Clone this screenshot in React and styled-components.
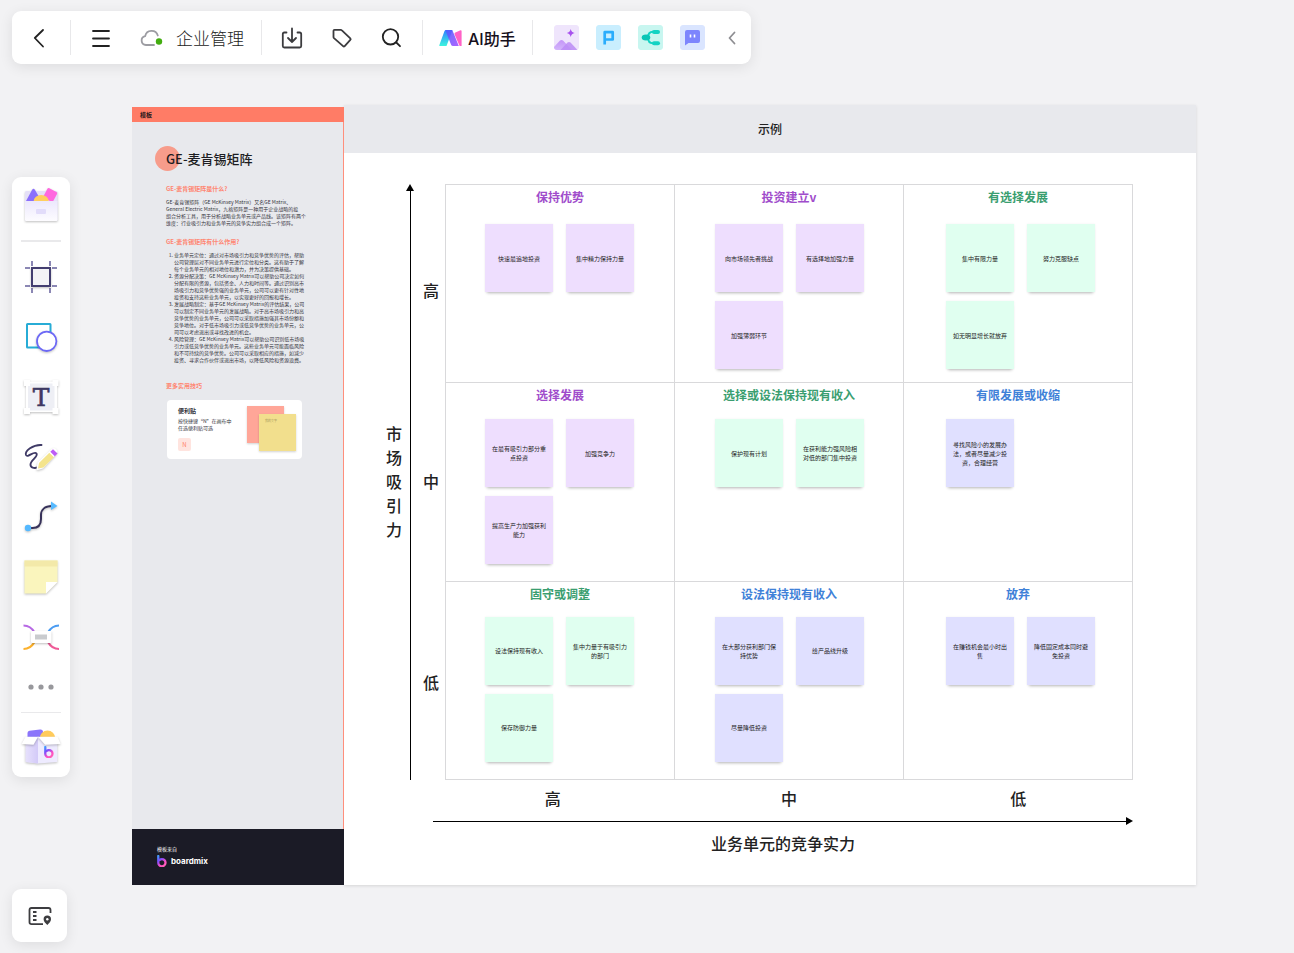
import React from "react";
import styled, { createGlobalStyle } from "styled-components";

const GlobalStyle = createGlobalStyle`
    * {
        box-sizing: border-box;
    }

    body {
        margin: 0;
        background-color: #f2f2f4;
        color: #222;
        font-family: "Noto Sans CJK SC", "Noto Sans", sans-serif;
    }

    h1, h2, h3, p, ol {
        margin: 0;
        padding: 0;
    }

    button {
        border: none;
        padding: 0;
        background: none;
        color: inherit;
        font-family: inherit;
        cursor: pointer;
    }

    svg {
        display: block;
        flex: none;
    }
`;

const Page = styled.div`
    min-height: 100vh;
    display: flex;
    flex-direction: column;
    align-items: flex-start;
    padding: 11px 12px;
`;

/* top toolbar */

const Toolbar = styled.header`
    display: flex;
    align-items: center;
    height: 53px;
    background-color: white;
    border-radius: 9px;
    box-shadow: 0 3px 14px rgba(0, 0, 0, 0.09);
`;

const ToolbarDivider = styled.div`
    width: 1px;
    height: 35px;
    background-color: #e8e8ea;
`;

const ToolbarGroup = styled.div`
    display: flex;
    align-items: center;
    width: ${props => props.$width}px;
    padding-left: ${props => props.$inset || 0}px;
    gap: ${props => props.$gap || 0}px;
`;

const IconButton = styled.button`
    display: flex;
    align-items: center;
    justify-content: center;
    width: ${props => props.$width || 50}px;
    height: 53px;
`;

const FileName = styled.h1`
    margin-left: 5px;
    font-size: 17px;
    font-weight: 300;
    line-height: 24px;
    color: #222;
    white-space: nowrap;
`;

const AiButton = styled.button`
    display: flex;
    align-items: center;
    gap: 6px;
    width: 109px;
    height: 53px;
    padding-left: 16px;
    font-family: Inter, "Noto Sans CJK SC", sans-serif;
    font-size: 16px;
    font-weight: 500;
    color: #16101c;
    white-space: nowrap;
`;

const AppButton = styled.button`
    width: 25px;
    height: 25px;
    border-radius: 3px;
    overflow: hidden;
`;

/* workspace */

const Workspace = styled.main`
    display: flex;
    align-items: flex-start;
    align-self: stretch;
    gap: 62px;
    margin-top: 41px;
    padding-right: 86px;
`;

const Rail = styled.nav`
    flex: none;
    display: flex;
    flex-direction: column;
    align-items: center;
    width: 58px;
    margin-top: 72px;
    background-color: white;
    border-radius: 9px;
    box-shadow: 0 3px 14px rgba(0, 0, 0, 0.09);
`;

const RailButton = styled.button`
    display: flex;
    align-items: center;
    justify-content: center;
    width: 58px;
    height: ${props => props.$height || 60}px;
`;

const RailDivider = styled.div`
    width: 40px;
    height: ${props => props.$size}px;
    margin: 5px 0 ${props => props.$after}px;
    background-color: #e9e9eb;
`;

const Board = styled.div`
    flex: 1;
    min-width: 0;
    display: flex;
`;

/* left template panel */

const Template = styled.aside`
    position: relative;
    flex: none;
    display: flex;
    flex-direction: column;
    width: 212px;
    margin-top: 2px;
    background-color: #e8e9ed;
`;

const TemplateTag = styled.div`
    padding-left: 8px;
    background-color: #ff7c66;
    font-size: 6px;
    font-weight: 700;
    line-height: 15px;
    color: #2b1a1c;
`;

const TemplateBody = styled.div`
    flex: 1;
    padding: 24px 41px 0 34px;
    border-right: 1px solid #ff8f7c;
`;

const TemplateTitle = styled.h2`
    display: flex;
    align-items: center;
    height: 25px;
    margin-left: -11px;
    font-size: 13px;
    font-weight: 500;
    color: #1d1d22;
    white-space: nowrap;

    &::before {
        content: "";
        width: 25px;
        height: 25px;
        margin-right: -14px;
        border-radius: 50%;
        background-color: #f79c8b;
    }

    span {
        position: relative;
    }
`;

const TemplateHeading = styled.h3`
    margin-top: ${props => props.$top}px;
    font-size: 6px;
    font-weight: 700;
    line-height: 8px;
    color: #ff8672;
`;

const TemplateText = styled.p`
    margin-top: 5px;
    font-size: 5px;
    line-height: 7px;
    color: #33333b;
    white-space: nowrap;
`;

const TemplateList = styled.ol`
    margin-top: 5px;
    padding-left: 8px;
    font-size: 5px;
    line-height: 7px;
    color: #33333b;
    white-space: nowrap;
`;

const TipCard = styled.div`
    display: flex;
    justify-content: space-between;
    width: 135px;
    height: 59px;
    margin: 10px 0 0 1px;
    padding: 6px 6px 8px 11px;
    border-radius: 4px;
    background-color: white;
`;

const TipText = styled.div`
    font-size: 5px;
    line-height: 7px;
    color: #33333b;
    white-space: nowrap;

    strong {
        display: block;
        margin-bottom: 2px;
        font-size: 6px;
        line-height: 9px;
    }
`;

const KeyCap = styled.kbd`
    display: block;
    width: 13px;
    margin-top: 7px;
    border-radius: 2px;
    background-color: #ffe4df;
    font-family: inherit;
    font-size: 6px;
    line-height: 13px;
    text-align: center;
    color: #ff7c66;
`;

const TipNotes = styled.div`
    display: grid;
    grid-template-columns: 12px 25px 12px;
    grid-template-rows: 8px 29px 8px;
`;

const TipNote = styled.div`
    grid-column: ${props => (props.$front ? "2 / 4" : "1 / 3")};
    grid-row: ${props => (props.$front ? "2 / 4" : "1 / 3")};
    padding: 5px 6px;
    background-color: ${props => (props.$front ? "#f2df8d" : "#ffa698")};
    box-shadow: 0 1px 2px rgba(0, 0, 0, 0.18);
    font-size: 3px;
    line-height: 5px;
    color: #a89a5e;
    white-space: nowrap;
`;

const Provider = styled.footer`
    height: 56px;
    padding: 16px 0 0 25px;
    background-color: #1b1b26;
    font-size: 5px;
    line-height: 8px;
    color: white;
`;

const Brand = styled.div`
    display: flex;
    align-items: center;
    gap: 4px;
    margin-top: 1px;
    font-family: Inter, sans-serif;
    font-size: 8px;
    font-weight: 700;
    line-height: 14px;
`;

/* matrix */

const Example = styled.section`
    flex: 1;
    min-width: 0;
    background-color: white;
    box-shadow: 0 1px 3px rgba(0, 0, 0, 0.12);
`;

const ExampleTitle = styled.h2`
    background-color: #e8e9ed;
    font-size: 12px;
    font-weight: 500;
    line-height: 48px;
    text-align: center;
`;

const Chart = styled.div`
    display: grid;
    grid-template-columns: 16px 16px 27px 1fr;
    padding: 31px 63px 30px 42px;
    font-size: 16px;
    font-weight: 500;
    line-height: 24px;
    text-align: center;
`;

const SideTitle = styled.div`
    align-self: center;
    width: 16px;
    padding-bottom: 2px;
`;

const SideAxis = styled.div`
    display: flex;
    flex-direction: column;
    align-items: center;

    &::after {
        content: "";
        flex: 1;
        width: 1px;
        background-color: black;
    }
`;

const SideLabels = styled.div`
    display: grid;
    grid-template-rows: repeat(3, 1fr);
    align-items: center;
    padding-top: 8px;

    span {
        padding-right: 1px;
    }

    span:nth-child(2) {
        padding-bottom: 10px;
    }
`;

const Matrix = styled.div`
    display: grid;
    grid-template-columns: repeat(3, 1fr);
    grid-template-rows: repeat(3, 1fr);
    min-height: 596px;
    border-top: 1px solid #d9d9db;
    border-left: 1px solid #d9d9db;
`;

const Cell = styled.div`
    border-right: 1px solid #d9d9db;
    border-bottom: 1px solid #d9d9db;
`;

const CellTitle = styled.h3`
    font-size: 12px;
    font-weight: 700;
    line-height: 24px;
    color: ${props => props.$color};
`;

const Notes = styled.div`
    display: grid;
    grid-template-columns: 68px 68px;
    gap: 9px 13px;
    margin-top: ${props => props.$top}px;
    padding-left: ${props => props.$left}px;
`;

const Note = styled.div`
    display: flex;
    align-items: center;
    justify-content: center;
    height: 68px;
    padding: 0 5px;
    background-color: ${props => props.$color};
    box-shadow: 0 3px 3px -2px rgba(0, 0, 0, 0.28), 0 0 2px rgba(0, 0, 0, 0.06);
    font-size: 6px;
    font-weight: 400;
    line-height: 9px;
    color: #222;
    white-space: pre;
`;

const BottomLabels = styled.div`
    grid-column: 4;
    display: grid;
    grid-template-columns: repeat(3, 1fr);
    padding: 6px 0 7px;

    span:first-child {
        padding-right: 14px;
    }
`;

const BottomAxis = styled.div`
    grid-column: 3 / 5;
    display: flex;
    align-items: center;
    margin-left: 15px;

    &::before {
        content: "";
        flex: 1;
        height: 1px;
        background-color: black;
    }
`;

const BottomTitle = styled.div`
    grid-column: 3 / 5;
    padding: 6px 0 0 15px;
`;

const MapButton = styled.button`
    display: flex;
    align-items: center;
    justify-content: center;
    width: 55px;
    height: 53px;
    margin-top: 4px;
    background-color: white;
    border-radius: 9px;
    box-shadow: 0 3px 14px rgba(0, 0, 0, 0.09);
`;

/* icons */

const LineIcon = ({ children, width = 24, color = "#222" }) => (
    <svg width={width} height="24" viewBox={`0 0 ${width} 24`} fill="none" stroke={color} strokeWidth="1.8" strokeLinecap="round" strokeLinejoin="round">
        {children}
    </svg>
);

const RailIcon = ({ children }) => (
    <svg width="40" height="40" viewBox="0 0 40 40" fill="none" overflow="visible">
        {children}
    </svg>
);

const AppIcon = ({ children }) => (
    <svg width="25" height="25" viewBox="0 0 25 25" fill="none">
        {children}
    </svg>
);

const Shaded = styled.g`
    filter: drop-shadow(0 1px 1px rgba(0, 0, 0, 0.25));
`;

const Gradients = styled.svg`
    position: absolute;
`;

const Defs = () => (
    <Gradients width="0" height="0" aria-hidden="true">
        <defs>
            <linearGradient id="aiBlue" x1="0" y1="0" x2="0" y2="1">
                <stop offset="0" stopColor="#2f80ff" />
                <stop offset="1" stopColor="#3cf5de" />
            </linearGradient>
            <linearGradient id="aiPurple" x1="0" y1="0" x2="1" y2="1">
                <stop offset="0" stopColor="#4a5cff" />
                <stop offset="1" stopColor="#a24dff" />
            </linearGradient>
            <linearGradient id="brand" x1="0" y1="0" x2="10" y2="12" gradientUnits="userSpaceOnUse">
                <stop offset="0" stopColor="#2fb4ff" />
                <stop offset="0.35" stopColor="#7a4dff" />
                <stop offset="0.65" stopColor="#ff4fc3" />
                <stop offset="1" stopColor="#ff6fb0" />
            </linearGradient>
            <linearGradient id="hill" x1="0" y1="0" x2="0" y2="1">
                <stop offset="0" stopColor="#c495f8" />
                <stop offset="1" stopColor="#d3b5fb" />
            </linearGradient>
            <linearGradient id="pocket" x1="0" y1="0" x2="0" y2="1">
                <stop offset="0" stopColor="#ece8fd" />
                <stop offset="1" stopColor="#fdfcff" />
            </linearGradient>
            <linearGradient id="carton" x1="0" y1="0" x2="1" y2="0">
                <stop offset="0" stopColor="#e6e0fc" />
                <stop offset="1" stopColor="#d3caf8" />
            </linearGradient>
        </defs>
    </Gradients>
);

const BrandMark = ({ x = 0, y = 0 }) => (
    <svg x={x} y={y} width="10" height="12" viewBox="0 0 10 12" fill="none">
        <path d="M1.3 1v6.6a3.6 3.6 0 1 0 3.6-3.5c-1 0-1.7.4-2.2.9" stroke="url(#brand)" strokeWidth="2.3" strokeLinecap="round" />
    </svg>
);

const AiLogo = () => (
    <svg width="23" height="16" viewBox="0 0 23 16">
        <path d="M7 0h6.5L7.5 16H0.8Q0 16 0.3 15.2L5.4 1.2Q5.9 0 7 0Z" fill="url(#aiBlue)" />
        <path d="M6.3 0H12q1.2 0 1.7 1.1L19.8 16H14q-1.4 0-1.9-1.2L8 4.5Z" fill="url(#aiPurple)" fillOpacity="0.88" />
        <path d="M15.5 4.2Q15.3 3 16.4 2.6L21.5 0.3Q22.6 0 22.6 1.2V16h-2Z" fill="#ff62c6" />
    </svg>
);

const PocketIcon = () => (
    <RailIcon>
        <Shaded>
            <rect x="4" y="5" width="32.5" height="30" rx="1.5" fill="#e5e0f8" />
            <path d="M5 15 11 4q1.5-2.6 3 0l6.5 11Z" fill="#8b70fb" />
            <rect x="23.8" y="3.5" width="11" height="11" rx="1.5" transform="rotate(28 29.3 9)" fill="#ff68df" />
            <path d="M12.700 15a7.500 6 0 0 1 15 0Z" fill="#ffcf5f" />
            <path d="M4 15h32.5v18.500a1.500 1.500 0 0 1-1.500 1.500h-29.500a1.500 1.500 0 0 1-1.500-1.500Z" fill="url(#pocket)" />
        </Shaded>
        <rect x="15" y="23" width="10" height="5" rx="1" fill="#e2dcfa" />
    </RailIcon>
);

const FrameIcon = () => (
    <RailIcon>
        <path d="M11 4v5M29 4v5M11 31v5M29 31v5M4 11h5M4 29h5M31 11h5M31 29h5" stroke="#8b87b4" strokeWidth="2" />
        <Shaded>
            <rect x="11" y="11" width="18" height="18" fill="#f3f3f6" stroke="#433e70" strokeWidth="2" />
        </Shaded>
    </RailIcon>
);

const ShapesIcon = () => (
    <RailIcon>
        <rect x="6" y="7" width="23.5" height="23.5" rx="0.5" fill="white" stroke="#27acd6" strokeWidth="2" />
        <Shaded>
            <circle cx="25.7" cy="24.3" r="9.7" fill="white" stroke="#6c68f6" strokeWidth="1.8" />
        </Shaded>
    </RailIcon>
);

const TextIcon = () => (
    <RailIcon>
        <Shaded>
            <rect x="5" y="4.5" width="31" height="30.5" fill="white" />
            <path d="M3 3h6v6h-6ZM31.500 3h6v6h-6ZM3 31h6v6h-6ZM31.500 31h6v6h-6Z" fill="white" />
        </Shaded>
        <path d="M9 6.500h22.500v2.500h2v22h-2v2.500h-22.500v-2.500h-2v-22h2Z" fill="#eeeff5" />
        <text x="20" y="29" fontFamily="DejaVu Serif" fontSize="25" textAnchor="middle" fill="#3d3862" stroke="#3d3862" strokeWidth="0.6">T</text>
    </RailIcon>
);

const PenIcon = () => (
    <RailIcon>
        <path d="M20.500 8C12 7.500 3.500 14 5 18C6.500 21.500 13 13.500 15.500 16.500C17.500 20 9.500 23 9.500 27.500C9.500 31 13 31.500 17 30.500" stroke="#3f3a66" strokeWidth="1.9" strokeLinecap="round" />
        <Shaded>
            <path d="M16.500 32l1-6L31.500 12.500q1.500-1 3 .5t.5 3L21.500 30.500Z" fill="white" stroke="white" strokeWidth="2" strokeLinejoin="round" />
        </Shaded>
        <path d="M17 31.500l1-5.500L28.300 15.700l4.500 4.500L22.500 30.500Z" fill="#f4e48c" />
        <path d="M29.300 14.800l2.700-2.600 4.500 4.400-2.700 2.700Z" fill="#bd5cf5" />
    </RailIcon>
);

const ConnectorIcon = () => (
    <RailIcon>
        <Shaded>
            <path d="M9 31h2.500c6 0 8.500-4 8.500-9v-4c0-5 3.500-9 11-9" stroke="#37325a" strokeWidth="2" />
            <circle cx="7" cy="31" r="3.2" fill="#55b9ff" />
            <path d="M30 4.500 36.500 9 30 13Z" fill="#55b9ff" />
        </Shaded>
    </RailIcon>
);

const StickyIcon = () => (
    <RailIcon>
        <Shaded>
            <path d="M3.500 3.500h33V25L25 36.500H3.500Z" fill="#faf5bd" />
            <path d="M25 36.500V25h11.500Z" fill="white" />
        </Shaded>
        <path d="M3.500 3.500h33v6h-33Z" fill="#f3e9a9" />
    </RailIcon>
);

const MindMapIcon = () => (
    <RailIcon>
        <g strokeWidth="2.2">
            <path d="M2.500 8.500c5 0 8.500 2.500 11 7" stroke="#b769e4" />
            <path d="M38 8.500c-5 0-8.500 2.500-11 7" stroke="#4b9cf2" />
            <path d="M2.500 32c5 0 8.500-2.500 11-7" stroke="#fbb02c" />
            <path d="M38 32c-5 0-8.500-2.500-11-7" stroke="#ef5a97" />
        </g>
        <Shaded>
            <rect x="10" y="14" width="20.5" height="12" rx="1" fill="white" />
        </Shaded>
        <rect x="14" y="17.5" width="12" height="5" fill="#c9cbce" />
    </RailIcon>
);

const MoreIcon = () => (
    <RailIcon>
        <g fill="#98989c">
            <circle cx="10" cy="20" r="2.6" />
            <circle cx="20" cy="20" r="2.6" />
            <circle cx="30" cy="20" r="2.6" />
        </g>
    </RailIcon>
);

const CartonIcon = () => (
    <RailIcon>
        <path d="M6.500 12V7q0-2 2-2.300L19 3.500q3-.3 3 2.500v6Z" fill="#8b75fb" />
        <path d="M18.800 12a7.700 7.500 0 0 1 15.400 0Z" fill="#ffcb5c" />
        <Shaded>
            <path d="M4.700 14 17 10.700 36.300 14v22L17 37.500 4.700 36Z" fill="#eeebff" />
            <path d="M4.700 14 17 11v26.500L4.700 36Z" fill="url(#carton)" />
        </Shaded>
        <Shaded>
            <path d="M4.500 10.700H17L12.500 18.700 0.700 18Z" fill="white" />
            <path d="M17 10.700h19.500L39.700 18 24 18.700Z" fill="white" />
        </Shaded>
        <BrandMark x={23} y={20} />
    </RailIcon>
);

const MapIcon = () => (
    <svg width="24" height="20" viewBox="0 0 24 20" fill="none">
        <path d="M15 18.200H3.500q-2 0-2-2V4q0-2 2-2h17q2 0 2 2v3" stroke="#3d3d40" strokeWidth="1.8" />
        <path d="M5 6h3.500M5 10h3.500M5 14h3.500" stroke="#3d3d40" strokeWidth="1.8" />
        <path d="M19.300 19c-2-2-3.700-3.500-3.700-5.800a3.700 3.700 0 0 1 7.400 0c0 2.300-1.700 3.800-3.700 5.800Z" fill="#3d3d40" />
        <circle cx="19.3" cy="13.2" r="1.2" fill="white" />
    </svg>
);

const railTools = [
    { label: "画框", Icon: FrameIcon },
    { label: "图形", Icon: ShapesIcon },
    { label: "文本", Icon: TextIcon },
    { label: "画笔", Icon: PenIcon },
    { label: "连线", Icon: ConnectorIcon },
    { label: "便签", Icon: StickyIcon },
    { label: "思维导图", Icon: MindMapIcon },
];

const tones = {
    purple: { title: "#a04ccb", note: "#eedefe" },
    green: { title: "#3a9e70", note: "#e0fff0" },
    blue: { title: "#3f81d8", note: "#e0e0ff" },
};

const noteTop = [15, 12, 11];
const noteLeft = [39, 40, 42];

const cells = [
    { title: "保持优势", tone: "purple", notes: ["快速最追地投资", "集中精力保持力量"] },
    { title: "投资建立v", tone: "purple", notes: ["向市场领先者挑战", "有选择地加强力量", "加强薄弱环节"] },
    { title: "有选择发展", tone: "green", notes: ["集中有限力量", "努力克服缺点", "如无明显增长就放弃"] },
    { title: "选择发展", tone: "purple", notes: ["在最有吸引力部分重\n点投资", "加强竞争力", "提高生产力加强获利\n能力"] },
    { title: "选择或设法保持现有收入", tone: "green", notes: ["保护现有计划", "在获利能力强风险相\n对低的部门集中投资"] },
    { title: "有限发展或收缩", tone: "blue", notes: ["寻找风险小的发展办\n法，或者尽量减少投\n资，合理经营"] },
    { title: "固守或调整", tone: "green", notes: ["设法保持现有收入", "集中力量于有吸引力\n的部门", "保存防御力量"] },
    { title: "设法保持现有收入", tone: "blue", notes: ["在大部分获利部门保\n持优势", "给产品线升级", "尽量降低投资"] },
    { title: "放弃", tone: "blue", notes: ["在赚钱机会最小时出\n售", "降低固定成本同时避\n免投资"] },
];

const intro = [
    "GE-麦肯锡矩阵（GE McKinsey Matrix）又名GE Matrix、",
    "General Electric Matrix，九格矩阵是一种用于企业战略的投",
    "组合分析工具，用于分析战略业务单元或产品线。该矩阵有两个",
    "维度：行业吸引力和业务单元的竞争实力组合成一个矩阵。",
];

const uses = [
    [
        "业务单元定位：通过对市场吸引力和竞争优势的评估，帮助",
        "公司管理层对不同业务单元进行定位和分类。这有助于了解",
        "每个业务单元的相对地位和潜力，并为决策提供基础。",
    ],
    [
        "资源分配决策：GE McKinsey Matrix可以帮助公司决定如何",
        "分配有限的资源，包括资金、人力和时间等。通过识别高市",
        "场吸引力和竞争优势强的业务单元，公司可以更有针对性地",
        "投资和支持这些业务单元，以实现更好的回报和增长。",
    ],
    [
        "发展战略制定：基于GE McKinsey Matrix的评估结果，公司",
        "可以制定不同业务单元的发展战略。对于高市场吸引力和高",
        "竞争优势的业务单元，公司可以采取措施加强其市场份额和",
        "竞争地位。对于低市场吸引力或低竞争优势的业务单元，公",
        "司可以考虑退出或寻找改进的机会。",
    ],
    [
        "风险管理：GE McKinsey Matrix可以帮助公司识别低市场吸",
        "引力或低竞争优势的业务单元。这些业务单元可能面临风险",
        "和不可持续的竞争优势。公司可以采取相应的措施，如减少",
        "投资、寻求合作伙伴或退出市场，以降低风险和资源浪费。",
    ],
];

const Lines = ({ items }) => items.map((line, i) => (
    <React.Fragment key={line}>
        {i > 0 && <br />}
        {line}
    </React.Fragment>
));

const TopToolbar = () => (
    <Toolbar>
        <ToolbarGroup $width={58}>
            <IconButton $width={54} aria-label="返回">
                <LineIcon><path d="M16 4 7.800 12l8.200 8.500" /></LineIcon>
            </IconButton>
        </ToolbarGroup>
        <ToolbarDivider />
        <ToolbarGroup $width={190}>
            <IconButton $width={60} aria-label="菜单">
                <LineIcon><path d="M4 5h16M4 12.500h16M4 20h16" /></LineIcon>
            </IconButton>
            <IconButton $width={40} aria-label="云同步">
                <LineIcon color="#9c9ca2">
                    <path d="M15 19H7a4.500 4.500 0 0 1-.8-8.900a6.500 6.500 0 0 1 12.600-.6" />
                    <circle cx="20" cy="15.5" r="3.2" fill="#43ad10" stroke="none" />
                </LineIcon>
            </IconButton>
            <FileName>企业管理</FileName>
        </ToolbarGroup>
        <ToolbarDivider />
        <ToolbarGroup $width={160} $inset={5}>
            <IconButton aria-label="导出">
                <LineIcon color="#3b3b3e">
                    <path d="M6.500 6.500H4.300q-1.500 0-1.500 1.500v12q0 1.500 1.500 1.500h15.400q1.500 0 1.500-1.500V8q0-1.500-1.500-1.500H17.500M12 2.500v13.500M8 12l4 4 4-4" />
                </LineIcon>
            </IconButton>
            <IconButton aria-label="标签">
                <LineIcon color="#3b3b3e">
                    <path d="M3.500 4.800q0-1 1-1h6.200q.7 0 1.200.5l8.400 8q.8.800 0 1.600l-5.600 6.200q-.8.800-1.600 0l-9.100-8q-.5-.5-.5-1.200Z" />
                </LineIcon>
            </IconButton>
            <IconButton aria-label="搜索">
                <LineIcon>
                    <circle cx="10.5" cy="10.8" r="7.700" />
                    <path d="m16.300 16.500 3.700 3.700" />
                </LineIcon>
            </IconButton>
        </ToolbarGroup>
        <ToolbarDivider />
        <AiButton>
            <AiLogo />
            AI助手
        </AiButton>
        <ToolbarDivider />
        <ToolbarGroup $width={218} $inset={21} $gap={17}>
            <AppButton aria-label="图片">
                <AppIcon>
                    <rect width="25" height="25" rx="2" fill="#efe5fc" />
                    <path d="M0 25v-3l6-6.500q1.500-1.200 3 0l9 9.500Z" fill="url(#hill)" />
                    <path d="M6.500 25l7-7.500q1.500-1.200 3 0l7 7.500Z" fill="#bb8cf5" fillOpacity="0.85" />
                    <path d="M16.700 4q.7 3.300 4 4-3.300.7-4 4-.7-3.300-4-4 3.300-.7 4-4Z" fill="#a751ee" />
                </AppIcon>
            </AppButton>
            <AppButton aria-label="演示">
                <AppIcon>
                    <rect width="25" height="25" rx="2" fill="#c9eefe" />
                    <path d="M8.700 19.500V7.200h8v7.300H8.700" stroke="#2badfc" strokeWidth="2.7" strokeLinejoin="round" />
                </AppIcon>
            </AppButton>
            <AppButton aria-label="导图">
                <AppIcon>
                    <rect width="25" height="25" rx="2" fill="#c8f6f0" />
                    <path d="M15 6.800c-3.500 0-5 2-5 5.700s1.500 5.700 5 5.700" stroke="#12d3c3" strokeWidth="2" />
                    <rect x="14" y="5" width="8" height="4" rx="2" fill="#12d3c3" />
                    <rect x="14" y="16.2" width="8" height="4" rx="2" fill="#12d3c3" />
                    <ellipse cx="8" cy="12.5" rx="4.3" ry="3" fill="#0bc6b6" />
                </AppIcon>
            </AppButton>
            <AppButton aria-label="对话">
                <AppIcon>
                    <rect width="25" height="25" rx="2" fill="#dae5ff" />
                    <path d="M5 20.500V7q0-2 2-2h11q2 0 2 2v9q0 2-2 2H8.500Z" fill="#7d85fd" />
                    <path d="M10.500 9.500v3M14.500 9.500v3" stroke="white" strokeWidth="1.6" />
                </AppIcon>
            </AppButton>
            <IconButton $width={20} aria-label="收起">
                <LineIcon width={20} color="#8e8e92"><path d="M12.500 6.500 7.500 12l5 5.500" /></LineIcon>
            </IconButton>
        </ToolbarGroup>
    </Toolbar>
);

const ToolRail = () => (
    <Rail>
        <RailButton $height={58} aria-label="素材"><PocketIcon /></RailButton>
        <RailDivider $size={2} $after={5} />
        {railTools.map(({ label, Icon }) => (
            <RailButton key={label} aria-label={label}><Icon /></RailButton>
        ))}
        <RailButton $height={40} aria-label="更多"><MoreIcon /></RailButton>
        <RailDivider $size={1} $after={2} />
        <RailButton $height={62} aria-label="资源库"><CartonIcon /></RailButton>
    </Rail>
);

const TemplatePanel = () => (
    <Template>
        <TemplateTag>模板</TemplateTag>
        <TemplateBody>
            <TemplateTitle><span>GE-麦肯锡矩阵</span></TemplateTitle>
            <TemplateHeading $top={14}>GE-麦肯锡矩阵是什么?</TemplateHeading>
            <TemplateText><Lines items={intro} /></TemplateText>
            <TemplateHeading $top={12}>GE-麦肯锡矩阵有什么作用?</TemplateHeading>
            <TemplateList>
                {uses.map(lines => (
                    <li key={lines[0]}><Lines items={lines} /></li>
                ))}
            </TemplateList>
            <TemplateHeading $top={19}>更多实用技巧</TemplateHeading>
            <TipCard>
                <TipText>
                    <strong>便利贴</strong>
                    按快捷键“N”在画布中
                    <br />
                    任选便利贴可选
                    <KeyCap>N</KeyCap>
                </TipText>
                <TipNotes>
                    <TipNote />
                    <TipNote $front>我的文字</TipNote>
                </TipNotes>
            </TipCard>
        </TemplateBody>
        <Provider>
            模板来自
            <Brand>
                <BrandMark />
                boardmix
            </Brand>
        </Provider>
    </Template>
);

const ExamplePanel = () => (
    <Example>
        <ExampleTitle>示例</ExampleTitle>
        <Chart>
            <SideTitle>市场吸引力</SideTitle>
            <SideAxis>
                <svg width="8" height="7" viewBox="0 0 8 7"><path d="M4 0 8 7H0Z" /></svg>
            </SideAxis>
            <SideLabels>
                <span>高</span>
                <span>中</span>
                <span>低</span>
            </SideLabels>
            <Matrix>
                {cells.map((cell, i) => (
                    <Cell key={cell.title}>
                        <CellTitle $color={tones[cell.tone].title}>{cell.title}</CellTitle>
                        <Notes $top={noteTop[Math.floor(i / 3)]} $left={noteLeft[i % 3]}>
                            {cell.notes.map(note => (
                                <Note key={note} $color={tones[cell.tone].note}>{note}</Note>
                            ))}
                        </Notes>
                    </Cell>
                ))}
            </Matrix>
            <BottomLabels>
                <span>高</span>
                <span>中</span>
                <span>低</span>
            </BottomLabels>
            <BottomAxis>
                <svg width="7" height="8" viewBox="0 0 7 8"><path d="M7 4 0 8V0Z" /></svg>
            </BottomAxis>
            <BottomTitle>业务单元的竞争实力</BottomTitle>
        </Chart>
    </Example>
);

const App = () => (
    <Page>
        <GlobalStyle />
        <Defs />
        <TopToolbar />
        <Workspace>
            <ToolRail />
            <Board>
                <TemplatePanel />
                <ExamplePanel />
            </Board>
        </Workspace>
        <MapButton aria-label="导航">
            <MapIcon />
        </MapButton>
    </Page>
);

export default App;
